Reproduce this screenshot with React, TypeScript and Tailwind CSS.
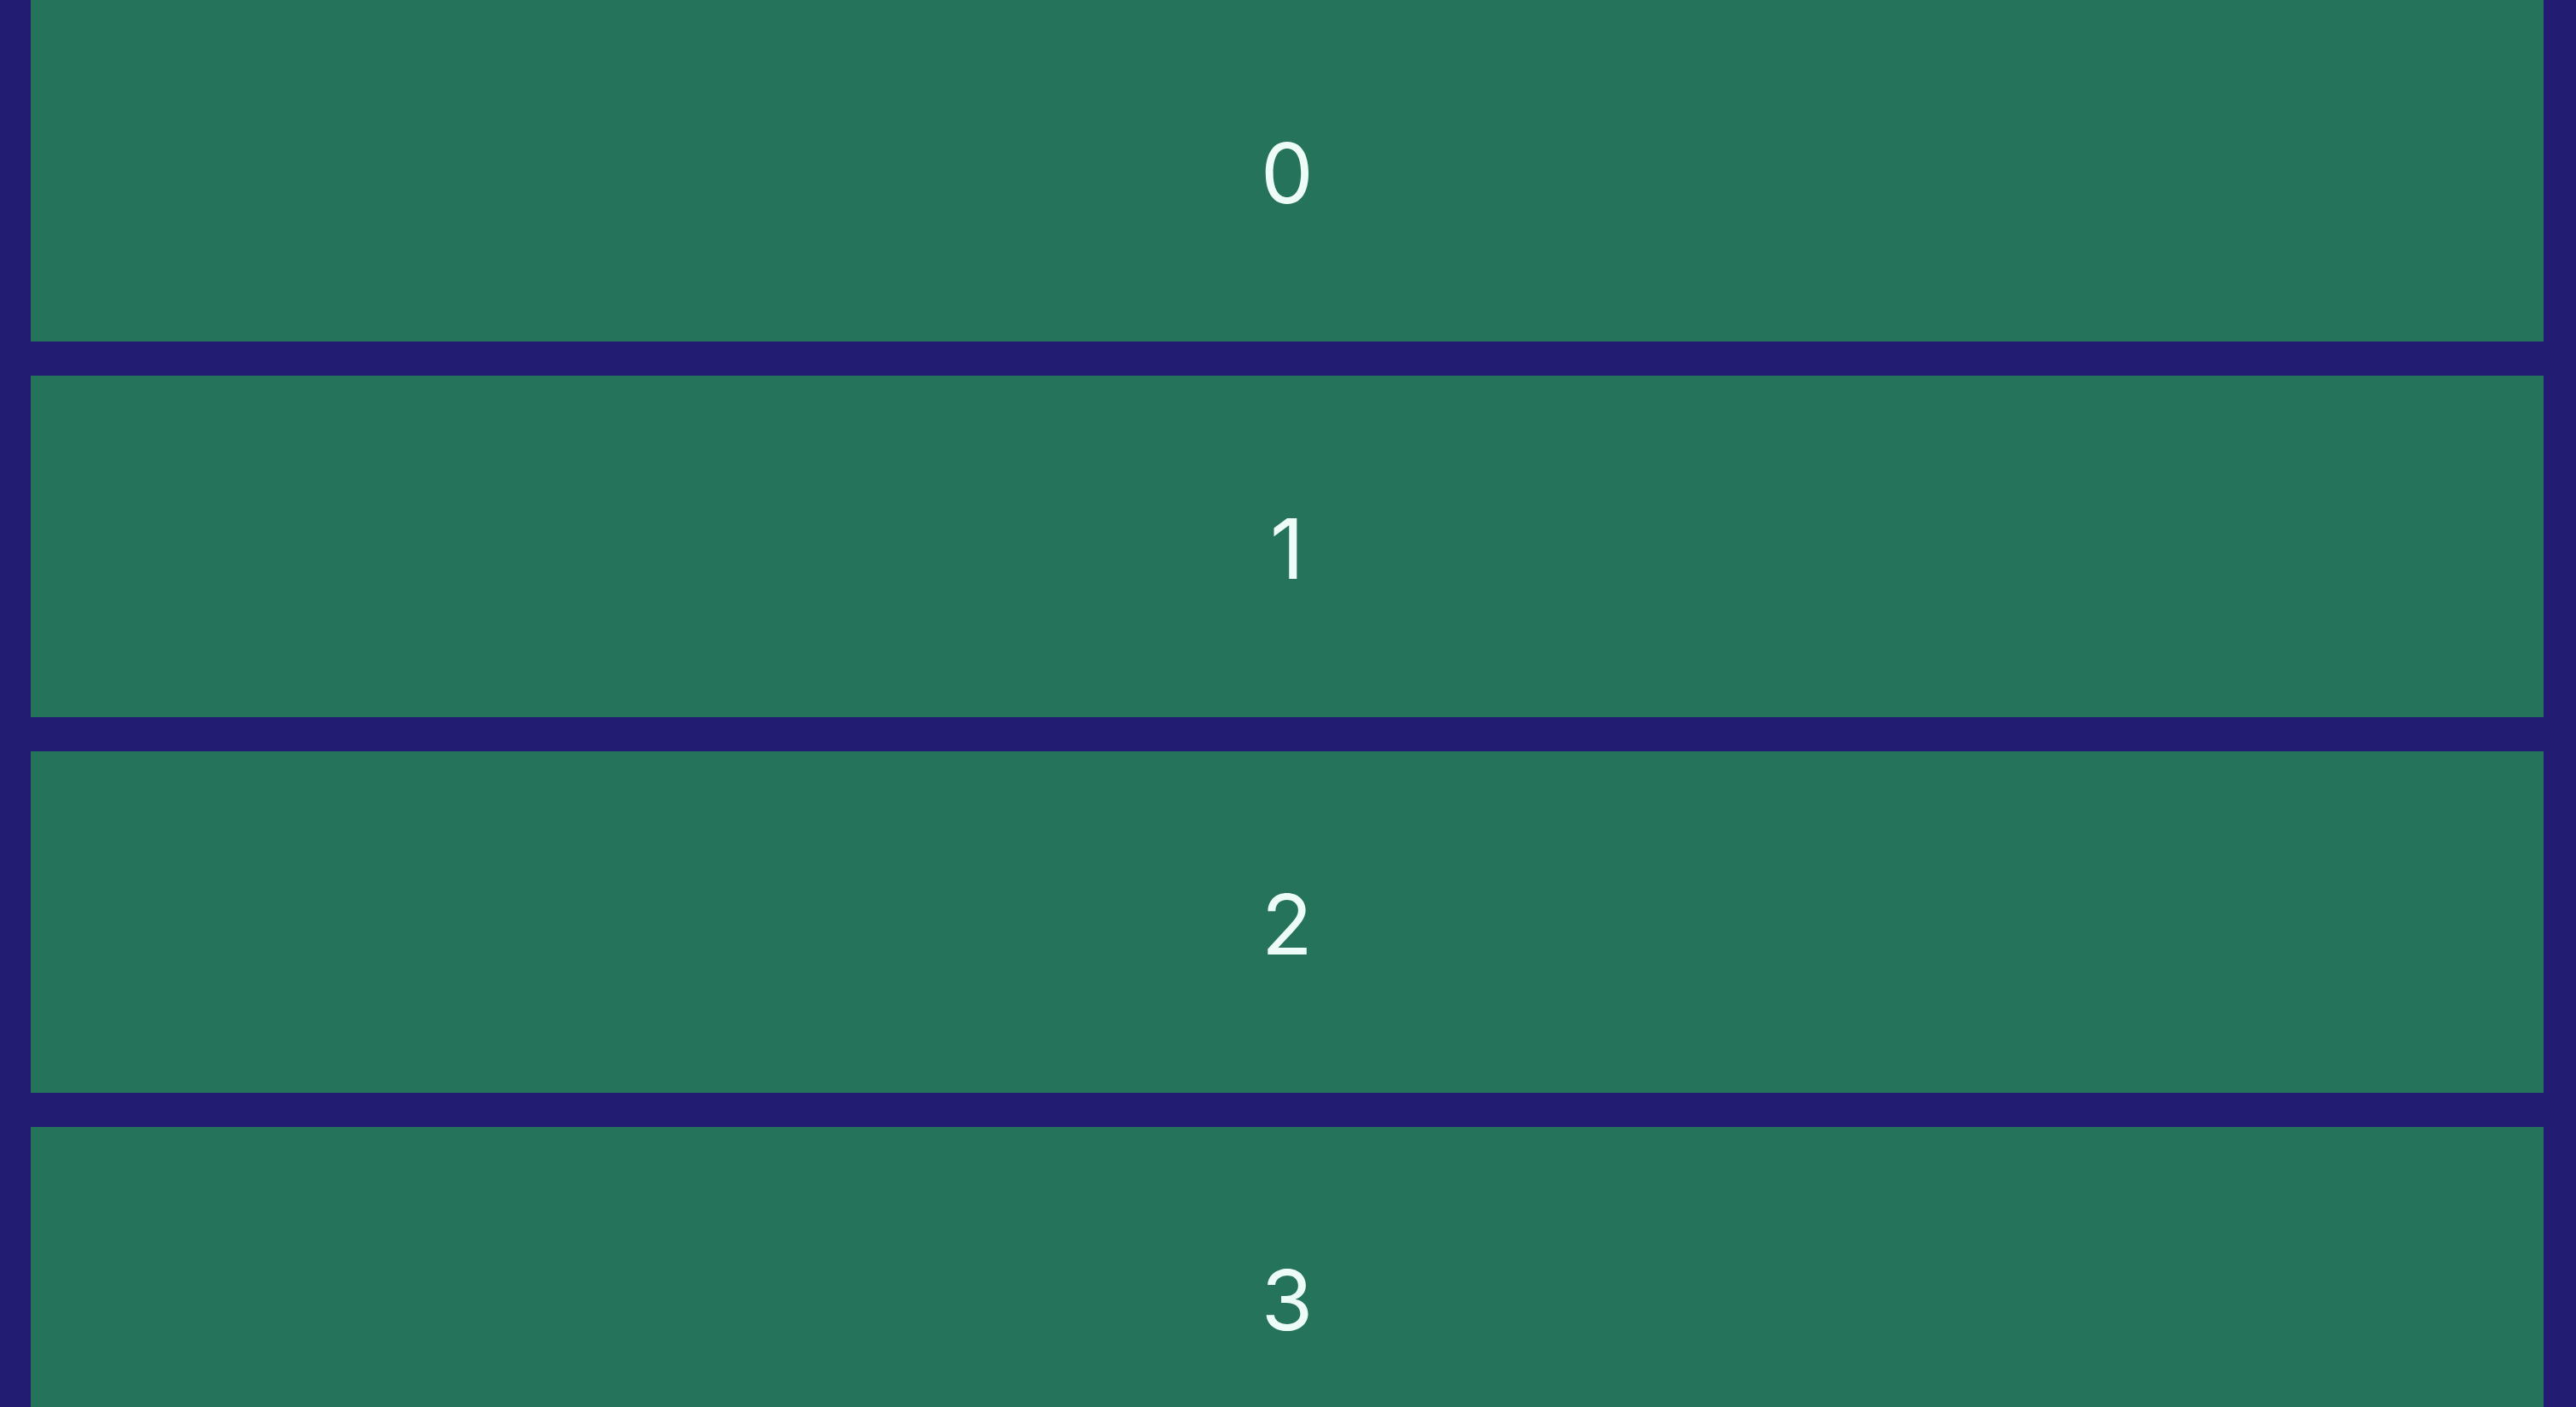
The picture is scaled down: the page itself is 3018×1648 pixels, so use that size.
export default function App() {
  const rows = [0, 1, 2, 3, 4];
  return (
    <div className="h-[1648px] overflow-hidden bg-[#221c73] pl-[36px] pr-[38px]">
      <div className="flex flex-col gap-[40px]">
        {rows.map((r) => (
          <div
            key={r}
            className="flex h-[400px] shrink-0 items-center justify-center bg-[#24735a] pt-[6px] text-[98px] leading-none text-[#eefcf8]"
            style={{ fontFamily: "Inter, 'Noto Sans', sans-serif" }}
          >
            {r}
          </div>
        ))}
      </div>
    </div>
  );
}
